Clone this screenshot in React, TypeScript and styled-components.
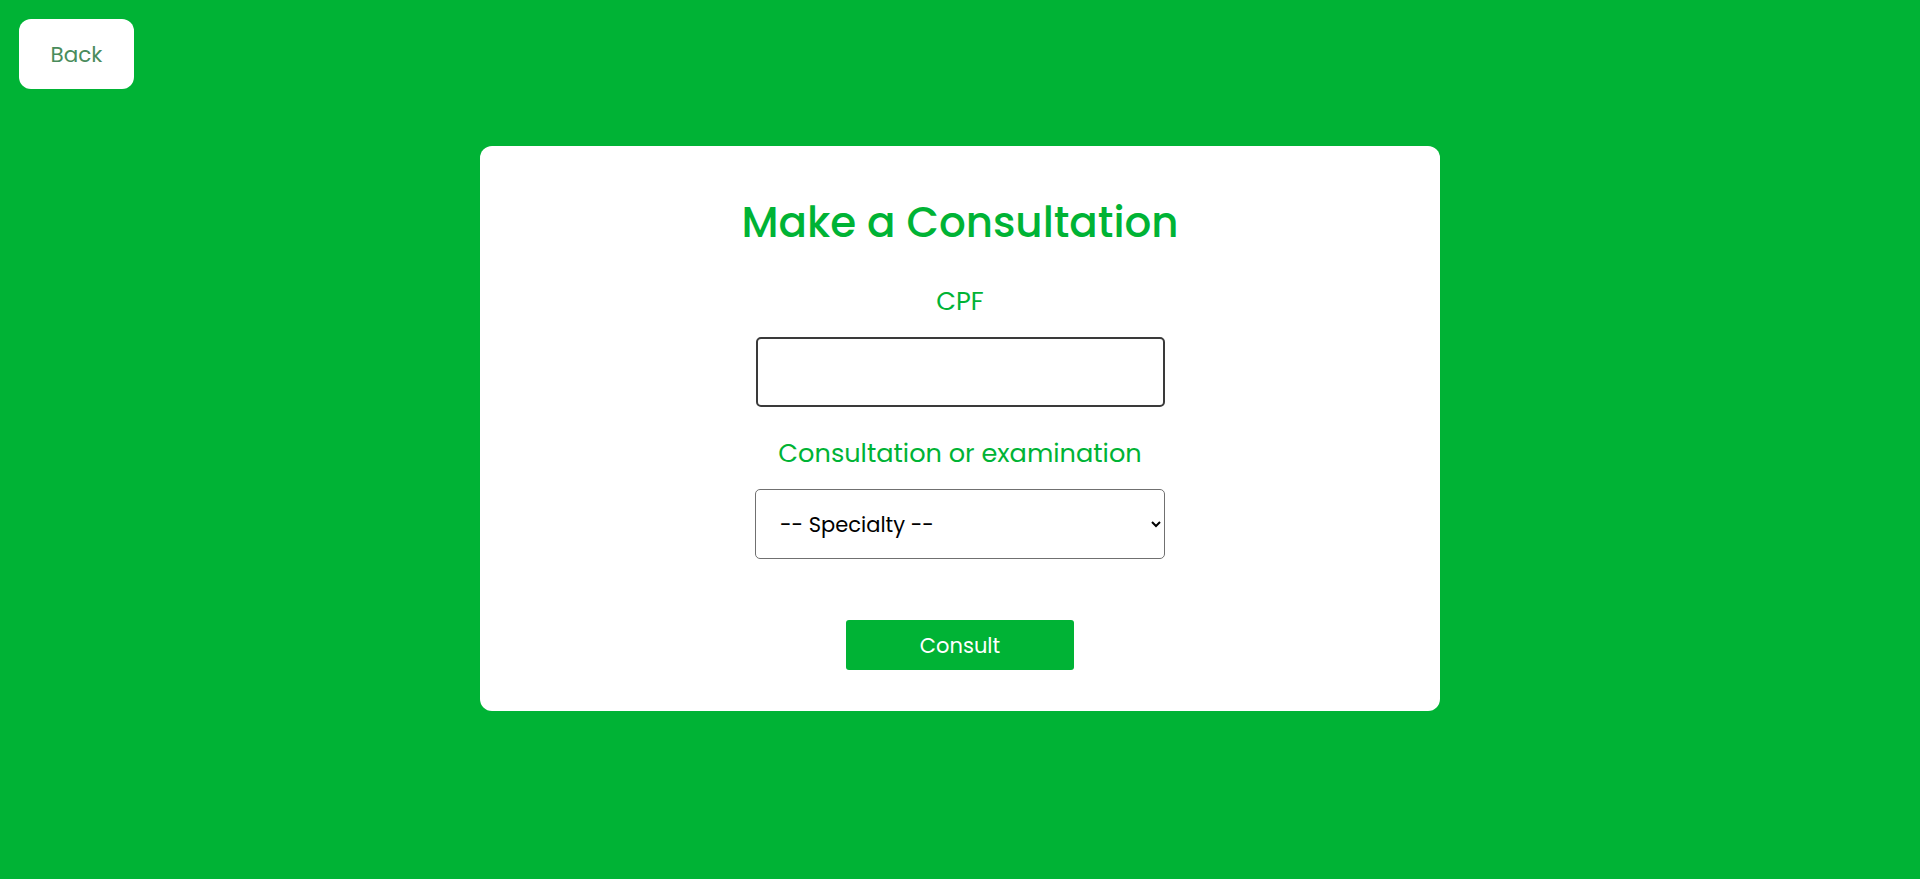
import React from "react";
import styled, { createGlobalStyle } from "styled-components";

const GlobalStyle = createGlobalStyle`
  html, body {
    margin: 0;
    padding: 0;
  }
  body {
    background: #00b335;
    font-family: Poppins, Inter, "Noto Sans", sans-serif;
  }
  * { box-sizing: border-box; }
`;

const Page = styled.div`
  min-height: 100vh;
  background: #00b335;
  padding: 19px 19px 40px;
  display: flex;
  flex-direction: column;
`;

const TopBar = styled.div`
  display: flex;
`;

const BackButton = styled.button`
  width: 115px;
  height: 70px;
  border: none;
  border-radius: 12px;
  background: #ffffff;
  color: #4a8c5c;
  font-family: Poppins, Inter, sans-serif;
  font-size: 21.5px;
  font-weight: 400;
  cursor: pointer;
`;

const Card = styled.form`
  align-self: center;
  margin-top: 57px;
  width: 960px;
  background: #ffffff;
  border-radius: 12px;
  padding: 49px 0 41px;
  display: flex;
  flex-direction: column;
  align-items: center;
`;

const Title = styled.h1`
  margin: 0;
  font-size: 42px;
  line-height: 56px;
  font-weight: 500;
  color: #00b335;
`;

const Label = styled.label<{ $top: number }>`
  display: block;
  margin-top: ${(p) => p.$top}px;
  font-size: 25.6px;
  line-height: 30px;
  color: #00b335;
  font-weight: 400;
`;

const TextInput = styled.input`
  margin-top: 21px;
  width: 409px;
  height: 70px;
  border: 2px solid #3a3a3a;
  border-radius: 5px;
  padding: 0 20px;
  font-size: 21px;
  font-family: Poppins, Inter, sans-serif;
  outline: none;
`;

const Select = styled.select`
  margin-top: 21px;
  width: 410px;
  height: 70px;
  border: 1px solid #707070;
  border-radius: 5px;
  padding: 0 16px 0 20px;
  font-size: 21px;
  font-family: Poppins, Inter, sans-serif;
  color: #000000;
  background: #ffffff;
`;

const SubmitButton = styled.button`
  margin-top: 61px;
  width: 228px;
  height: 50px;
  border: none;
  border-radius: 3px;
  background: #00b335;
  color: #ffffff;
  font-size: 21px;
  font-family: Poppins, Inter, sans-serif;
  cursor: pointer;
`;

export default function App() {
  return (
    <>
      <GlobalStyle />
      <Page>
        <TopBar>
          <BackButton type="button">Back</BackButton>
        </TopBar>
        <Card onSubmit={(e) => e.preventDefault()}>
          <Title>Make a Consultation</Title>
          <Label $top={35} htmlFor="cpf">CPF</Label>
          <TextInput id="cpf" type="text" />
          <Label $top={31} htmlFor="specialty">Consultation or examination</Label>
          <Select id="specialty" defaultValue="">
            <option value="">-- Specialty --</option>
          </Select>
          <SubmitButton type="submit">Consult</SubmitButton>
        </Card>
      </Page>
    </>
  );
}
